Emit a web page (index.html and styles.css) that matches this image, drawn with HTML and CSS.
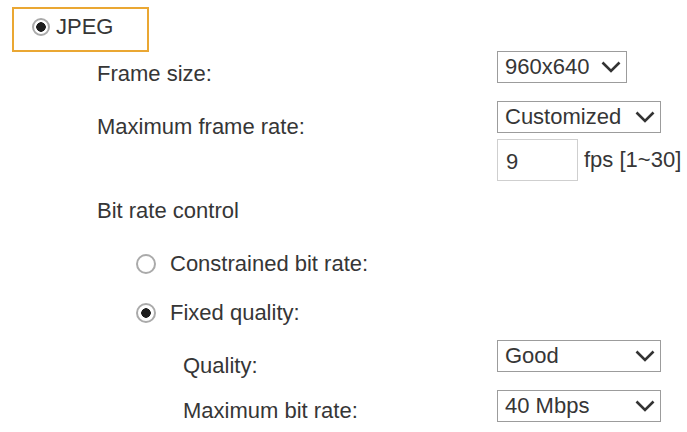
FILE: index.html
```
<!DOCTYPE html>
<html>
<head>
	<meta charset="UTF-8">
	<meta name="viewport" content="width=device-width, initial-scale=1.0">
	<title>Video settings</title>
	<link rel="stylesheet" href="styles.css">
</head>
<body>
	<div class="format">
		<span class="radio small on"></span>
		<span>JPEG</span>
	</div>

	<div class="row frame">
		<div class="label">Frame size:</div>
		<div class="select narrow">
			<span>960x640</span>
			<svg class="chev" width="20" height="12" viewBox="0 0 20 12"><path d="M1.5 1.5 L10 10 L18.5 1.5" fill="none" stroke="#333" stroke-width="2.6"/></svg>
		</div>
	</div>

	<div class="row rate">
		<div class="label">Maximum frame rate:</div>
		<div class="select">
			<span>Customized</span>
			<svg class="chev" width="20" height="12" viewBox="0 0 20 12"><path d="M1.5 1.5 L10 10 L18.5 1.5" fill="none" stroke="#333" stroke-width="2.6"/></svg>
		</div>
	</div>

	<div class="row fps">
		<div class="label"></div>
		<div class="fpsbox">
			<div class="input">9</div>
			<span>fps [1~30]</span>
		</div>
	</div>

	<div class="heading">Bit rate control</div>

	<div class="option cbr">
		<span class="radio"></span>
		<span>Constrained bit rate:</span>
	</div>

	<div class="option fixed">
		<span class="radio on"></span>
		<span>Fixed quality:</span>
	</div>

	<div class="row quality">
		<div class="label deep">Quality:</div>
		<div class="select">
			<span>Good</span>
			<svg class="chev" width="20" height="12" viewBox="0 0 20 12"><path d="M1.5 1.5 L10 10 L18.5 1.5" fill="none" stroke="#333" stroke-width="2.6"/></svg>
		</div>
	</div>

	<div class="row bitrate">
		<div class="label deep">Maximum bit rate:</div>
		<div class="select">
			<span>40 Mbps</span>
			<svg class="chev" width="20" height="12" viewBox="0 0 20 12"><path d="M1.5 1.5 L10 10 L18.5 1.5" fill="none" stroke="#333" stroke-width="2.6"/></svg>
		</div>
	</div>
</body>
</html>
```
FILE: styles.css
```
body {
	margin: 0;
	background: #fff;
	color: #363636;
	font-family: "Liberation Sans", Arial, sans-serif;
	font-size: 22px;
	line-height: 26px;
}
.format {
	display: flex;
	align-items: center;
	gap: 6px;
	box-sizing: border-box;
	width: 137px;
	height: 45px;
	margin: 7px 0 0 12px;
	padding: 0 0 5px 18px;
	border: 2px solid #eaa733;
}
.radio {
	display: inline-block;
	box-sizing: border-box;
	width: 20px;
	height: 20px;
	border: 2px solid #aaa;
	border-radius: 50%;
	background: #fff;
	flex: none;
}
.radio.small {
	width: 18px;
	height: 18px;
}
.radio.on {
	background: radial-gradient(circle, #1e1e1e 0 4.5px, #fff 5px);
}
.row {
	display: grid;
	grid-template-columns: 497px auto;
	align-items: start;
	height: 32px;
}
.label {
	padding-left: 97px;
	white-space: nowrap;
}
.label.deep {
	padding-left: 183px;
}
.select {
	display: flex;
	align-items: center;
	justify-content: space-between;
	box-sizing: border-box;
	width: 164px;
	height: 32px;
	padding: 0 5px 0 7px;
	border: 1.5px solid #9c9c9c;
	background: #fff;
}
.select.narrow {
	width: 130px;
}
.chev {
	flex: none;
}
.frame {
	margin-top: -1px;
}
.frame .label {
	padding-top: 10px;
}
.rate {
	margin-top: 18px;
}
.rate .label {
	padding-top: 13px;
}
.fps {
	margin-top: 6px;
	height: 42px;
}
.fpsbox {
	display: flex;
	align-items: center;
	gap: 6px;
}
.input {
	box-sizing: border-box;
	width: 81px;
	height: 42px;
	padding: 9px 0 0 8px;
	border: 1.5px solid #cfcfcf;
}
.heading {
	margin-top: 15px;
	padding-left: 97px;
	line-height: 30px;
}
.option {
	display: flex;
	align-items: center;
	gap: 14px;
	height: 30px;
	padding-left: 136px;
}
.cbr {
	margin-top: 23px;
}
.fixed {
	margin-top: 19px;
}
.quality {
	margin-top: 12px;
}
.quality .label {
	padding-top: 13px;
}
.bitrate {
	margin-top: 18px;
}
.bitrate .label {
	padding-top: 8px;
}
```
